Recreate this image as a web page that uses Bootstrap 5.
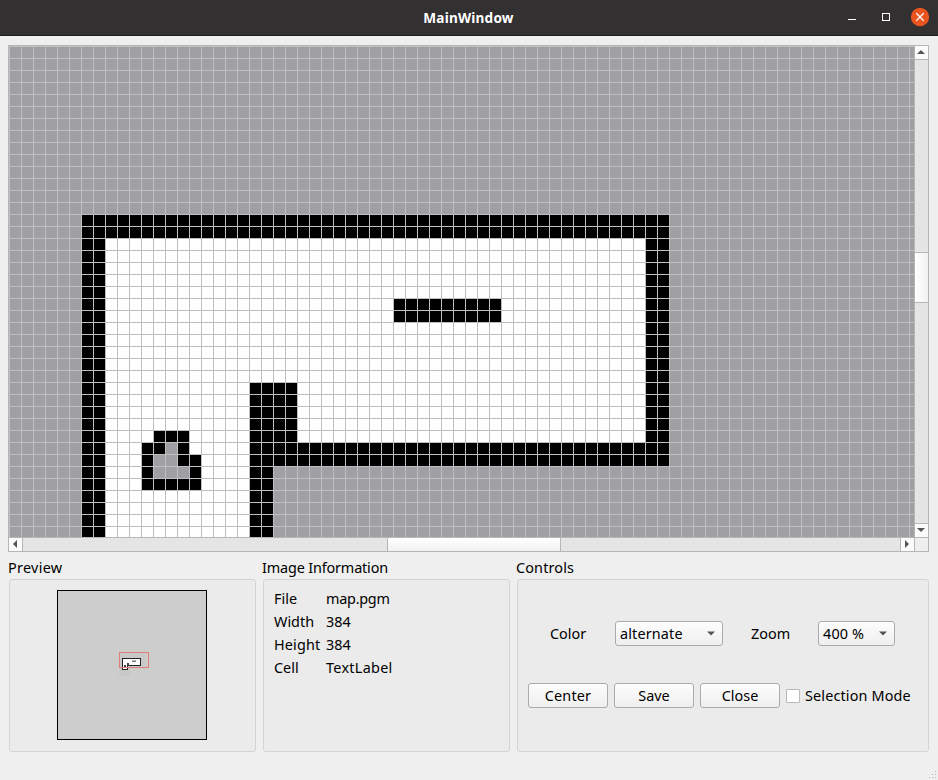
<!DOCTYPE html>
<html lang="en">
<head>
<meta charset="utf-8">
<title>MainWindow</title>
<link href="https://cdn.jsdelivr.net/npm/bootstrap@5.3.0/dist/css/bootstrap.min.css" rel="stylesheet">
<style>
  html { background: #fff; }
  body { width: 938px; height: 780px; overflow: hidden; background: transparent; color: #000;
    font-family: "Noto Sans", sans-serif; font-size: 14.4px; line-height: 23px; }
  .app-window { width: 938px; height: 780px; background: #efefef; border-radius: 5px 5px 0 0; }
  .titlebar { height: 36px; background: #323031; border-bottom: 1px solid #1f1d1e; color: #fff;
    font: 700 13.6px/35px "Noto Sans", sans-serif; letter-spacing: .2px; display: grid; grid-template-columns: 1fr auto 1fr; }
  .caption-text { margin-right: 1px; }
  .viewer { margin: 9px 9px 0 8px; width: 921px; height: 507px; border: 1px solid #b6b6b6;
    display: grid; grid-template-columns: 905px 14px; grid-template-rows: 491px 14px; }
  .bar { background: #e5e5e5; display: flex; }
  .bar-h { border-top: 1px solid #b6b6b6; }
  .bar-v { border-left: 1px solid #b6b6b6; flex-direction: column; }
  .bar-btn { width: 13px; height: 13px; background: #fbfbfb; flex: none; }
  .bar-v .thumb { height: 51px; border: solid #b6b6b6; border-width: 1px 0; background: linear-gradient(90deg, #fff, #f1f1f1); }
  .bar-h .thumb { width: 174px; border: solid #b6b6b6; border-width: 0 1px; background: linear-gradient(#fff, #f1f1f1); }
  .bar-corner { border: solid #b6b6b6; border-width: 1px 0 0 1px; }
  .b-end { border-right: 1px solid #b6b6b6; width: 14px; }
  .b-start { border-left: 1px solid #b6b6b6; width: 14px; }
  .b-down { border-bottom: 1px solid #b6b6b6; height: 14px; }
  .b-up { border-top: 1px solid #b6b6b6; height: 14px; }
  .groups { display: grid; grid-template-columns: 247px 247px 412px; column-gap: 7px; margin: 4px 0 0 9px; }
  .group-title { height: 23px; margin-left: -1px; white-space: nowrap; }
  .panel { height: 173px; background: #ebebeb; border: 1px solid #d3d3d3; border-radius: 3px; }
  .info { display: grid; grid-template-columns: 52px 1fr; grid-auto-rows: 23px; padding: 7px 0 0 10px; }
  .btn.qt { width: 80px; height: 25px; padding: 0; font-size: inherit; line-height: 23px; color: #000;
    border: 1px solid #ababab; border-radius: 3px; background: linear-gradient(#fdfdfd, #efefef); }
  .btn.qt.combo { display: flex; align-items: center; justify-content: space-between; padding: 0 7px 0 4px; }
  .row-top { margin: 41px 0 0 32px; height: 25px; display: flex; align-items: center; }
  .row-bottom { margin: 37px 0 0 10px; height: 25px; display: flex; align-items: center; gap: 6px; }
  .form-check-input.qt-check { width: 14px; height: 14px; border: 1px solid #b9b9b9; border-radius: 1px; margin: 0 5px 0 0; background: #fff; }
  .w65 { width: 65px; } .w67 { width: 67px; }
  .btn.qt.w108 { width: 108px; } .btn.qt.w77 { width: 77px; }
  .looser { letter-spacing: .3px; } .loose { letter-spacing: .15px; } .tight { letter-spacing: -.15px; } .slight { letter-spacing: -.25px; }
</style>
</head>
<body>
<div class="app-window d-flex flex-column">
  <header class="titlebar">
    <span></span>
    <span class="caption-text">MainWindow</span>
    <svg class="ms-auto" width="100" height="35" viewBox="838 0 100 35">
      <path d="M848 19.5h8" stroke="#fff"/>
      <rect x="882.5" y="13.5" width="7" height="7" fill="none" stroke="#fff"/>
      <circle cx="920" cy="17" r="9.2" fill="#e95420"/>
      <path d="M916.3 13.3l7.4 7.4M923.7 13.3l-7.4 7.4" stroke="#fff" stroke-width="1.3"/>
    </svg>
  </header>

  <main class="viewer">
    <svg width="905" height="491" viewBox="0 0 905 491" shape-rendering="crispEdges">
      <defs>
        <pattern id="cells" width="12" height="12" patternUnits="userSpaceOnUse">
          <path d="M0 0h12v1H1v11H0z" fill="#bfbfbf"/>
        </pattern>
      </defs>
      <rect width="905" height="491" fill="#a0a0a4"/>
      <g transform="scale(12)">
        <path d="M6 14h49v21H22v6H6z"/>
        <path d="M8 16h45v17H24v-5h-4v13H8z" fill="#fff"/>
        <path d="M32 21h9v2h-9zM12 32h3v2h1v3h-5v-4h1z"/>
        <path d="M13 33h1v2h1v1h-3v-2h1z" fill="#a0a0a4"/>
      </g>
      <rect width="905" height="491" fill="url(#cells)"/>
    </svg>
    <div class="bar bar-v">
      <div class="bar-btn b-down d-flex"><svg width="13" height="13"><path d="M2 8L6 4l4 4z" fill="#555"/></svg></div>
      <div class="thumb mt-auto" style="margin-bottom:220px"></div>
      <div class="bar-btn b-up d-flex"><svg width="13" height="13"><path d="M2 4L6 8l4-4z" fill="#555"/></svg></div>
    </div>
    <div class="bar bar-h">
      <div class="bar-btn b-end d-flex"><svg width="13" height="13"><path d="M8 2L4 6l4 4z" fill="#555"/></svg></div>
      <div class="thumb ms-auto" style="margin-right:339px"></div>
      <div class="bar-btn b-start d-flex"><svg width="13" height="13"><path d="M4 2L8 6l-4 4z" fill="#555"/></svg></div>
    </div>
    <div class="bar-corner"></div>
  </main>

  <section class="groups">
    <div>
      <div class="group-title looser">Preview</div>
      <div class="panel">
        <svg class="d-block" style="margin:10px 0 0 47px" width="150" height="150" shape-rendering="crispEdges">
          <rect x=".5" y=".5" width="149" height="149" fill="#cdcdcd" stroke="#000"/>
          <path d="M62 63h26v15H73v8H62z" fill="#c8c8c8"/>
          <path d="M65.500 68.500h18v7h-13v4h-5z" fill="#fff" stroke="#222"/>
          <path d="M75 71h4v1h-4z" fill="#777"/><path d="M75 70h4v1h-4z" fill="#bbb"/>
          <path d="M67 75h2v2h-2zM70 73h2v3h-2z" fill="#444"/>
          <rect x="62.500" y="62.500" width="29" height="15" fill="none" stroke="#e67b7b"/>
        </svg>
      </div>
    </div>
    <div>
      <div class="group-title tight">Image Information</div>
      <div class="panel info">
        <span>File</span><span class="slight">map.pgm</span>
        <span>Width</span><span>384</span>
        <span class="loose">Height</span><span>384</span>
        <span>Cell</span><span class="looser">TextLabel</span>
      </div>
    </div>
    <div>
      <div class="group-title loose">Controls</div>
      <div class="panel">
        <div class="row-top">
          <span class="w65">Color</span>
          <button class="btn qt combo loose w108" type="button">alternate<svg width="8" height="5"><path d="M0 .5h8L4 4.500z" fill="#555"/></svg></button>
          <span class="w67" style="margin-left:28px">Zoom</span>
          <button class="btn qt combo loose w77" type="button">400 %<svg width="8" height="5"><path d="M0 .5h8L4 4.500z" fill="#555"/></svg></button>
        </div>
        <div class="row-bottom">
          <button class="btn qt loose" type="button">Center</button>
          <button class="btn qt" type="button">Save</button>
          <button class="btn qt" type="button">Close</button>
          <label class="d-flex align-items-center text-nowrap"><input class="form-check-input qt-check" type="checkbox"><span class="loose">Selection Mode</span></label>
        </div>
      </div>
    </div>
  </section>
  <svg class="mt-auto ms-auto" width="12" height="12" fill="#b5b5b5" shape-rendering="crispEdges">
    <path d="M9 3h1v1H9zM6 6h1v1H6zM9 6h1v1H9zM3 9h1v1H3zM6 9h1v1H6zM9 9h1v1H9z"/>
  </svg>
</div>
<script src="https://cdn.jsdelivr.net/npm/bootstrap@5.3.0/dist/js/bootstrap.bundle.min.js"></script>
</body>
</html>
